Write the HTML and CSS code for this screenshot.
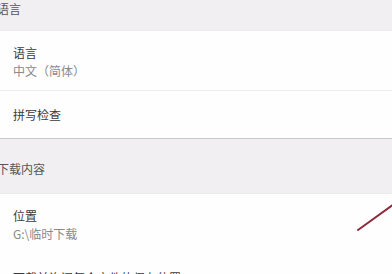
FILE: index.html
```html
<!DOCTYPE html>
<html lang="zh-CN">
<head>
    <meta charset="UTF-8">
    <meta name="viewport" content="width=device-width, initial-scale=1.0">
    <title>设置</title>
    <link rel="stylesheet" href="styles.css">
</head>
<body>
    <div class="settings">
        <h2 class="section-title first">语言</h2>
        <div class="card">
            <div class="row">
                <div class="label">语言</div>
                <div class="value">中文（简体）</div>
            </div>
            <div class="row single">
                <div class="label">拼写检查</div>
            </div>
        </div>

        <h2 class="section-title">下载内容</h2>
        <div class="card">
            <div class="row">
                <div class="label">位置</div>
                <div class="value">G:\临时下载</div>
            </div>
            <div class="row single">
                <div class="label">下载前询问每个文件的保存位置</div>
            </div>
        </div>

        <svg class="arrow" width="40" height="32" viewBox="0 0 40 32">
            <line x1="2" y1="27" x2="38" y2="1" stroke="#8e2a3c" stroke-width="2" stroke-linecap="round"/>
        </svg>
    </div>
</body>
</html>
```

FILE: styles.css
```css
body {
    margin: 0;
    background-color: #f1eff2;
    font-family: "Noto Sans CJK SC", "Noto Sans", sans-serif;
    overflow: hidden;
}

.settings {
    position: relative;
    width: 392px;
    height: 274px;
}

.section-title {
    margin: 0;
    padding: 21px 0 16px 0;
    margin-left: -3px;
    font-size: 12px;
    line-height: 17px;
    font-weight: normal;
    color: #58565a;
}

.section-title.first {
    padding: 0 0 13px 0;
}

.card {
    background-color: #fefefe;
    border-top: 1px solid #ebe9ec;
    border-bottom: 1px solid #c9c8ca;
}

.row {
    padding: 13px 13px 11px;
}

.row + .row {
    border-top: 1px solid #eeedef;
}

.row.single {
    padding: 15px 13px 15px;
}

.label {
    font-size: 12px;
    line-height: 17px;
    color: #3a3a3c;
}

.value {
    margin-top: 1px;
    font-size: 12px;
    line-height: 17px;
    color: #8a898d;
}

.card:last-of-type .row {
    padding-bottom: 27px;
}

.card:last-of-type .row + .row {
    border-top: none;
    padding-top: 0;
}

.arrow {
    position: absolute;
    left: 356px;
    top: 203px;
}
```
